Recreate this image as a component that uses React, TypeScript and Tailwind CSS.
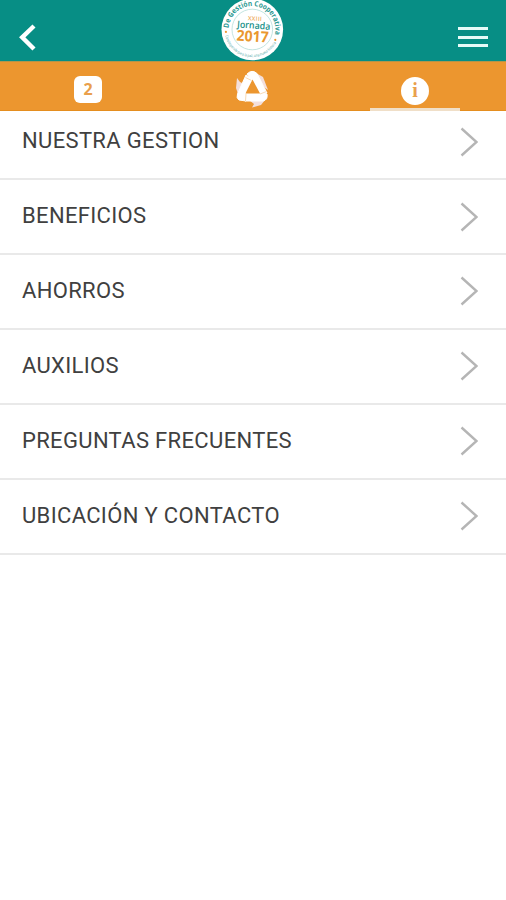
import { useState } from 'react';

type Tab = 'agenda' | 'coop' | 'info';

const ITEMS = [
  'NUESTRA GESTION',
  'BENEFICIOS',
  'AHORROS',
  'AUXILIOS',
  'PREGUNTAS FRECUENTES',
  'UBICACIÓN Y CONTACTO',
];

export default function App() {
  const [tab, setTab] = useState<Tab>('info');

  return (
    <div className="w-full min-h-screen bg-white font-['Roboto',sans-serif]">
      <Header />

      <nav className="h-[50px] bg-[#ec962f] border-t border-t-[#b4954a] border-b border-b-[#e58e1f] flex justify-between pl-[43px] pr-[46px]">
        <TabButton active={tab === 'agenda'} onClick={() => setTab('agenda')}>
          <span className="w-7 h-[27px] mt-[14px] rounded-md bg-white text-[#e9a04c] text-[16px] leading-[27px] font-bold text-center font-['Open_Sans',sans-serif]">
            2
          </span>
        </TabButton>
        <TabButton active={tab === 'coop'} onClick={() => setTab('coop')}>
          <CoopIcon />
        </TabButton>
        <TabButton active={tab === 'info'} onClick={() => setTab('info')}>
          <span className="w-7 h-7 mt-[15px] rounded-full bg-white text-[#e9a04c] text-[20px] leading-[27px] font-bold text-center font-['Liberation_Serif',serif]">
            i
          </span>
        </TabButton>
      </nav>

      <main className="overflow-hidden">
        <ul className="-mt-[5.8px]">
          {ITEMS.map((item) => (
            <li key={item} className="h-[74.9px] border-b-2 border-[#e9e9e9] flex items-center justify-between pl-[22px] pr-[28px]">
              <span className="text-[22px] leading-none tracking-[0.34px] text-[#404040] pb-px">{item}</span>
              <svg className="w-[18px] h-[30px]" viewBox="0 0 18 30" fill="none">
                <path d="M1.5 1.5 L16.5 15 L1.5 28.5" stroke="#b5b5b5" strokeWidth="2.4" />
              </svg>
            </li>
          ))}
        </ul>
      </main>
    </div>
  );
}

function Header() {
  return (
    <header className="h-[61px] bg-[#078e85] flex items-start justify-between pl-[18px] pr-[18px]">
      <button className="mt-[24px] pl-px w-[28px]">
        <svg width="17" height="27" viewBox="0 0 17 27" fill="none">
          <path d="M15 2 L3.2 13.3 L15 25" stroke="white" strokeWidth="4.4" />
        </svg>
      </button>
      <Seal />
      <button className="mt-[27px] flex flex-col gap-[5.5px]">
        <span className="w-[30px] h-[3px] bg-[#e6fbf8]" />
        <span className="w-[30px] h-[3px] bg-[#e6fbf8]" />
        <span className="w-[30px] h-[3px] bg-[#e6fbf8]" />
      </button>
    </header>
  );
}

function TabButton({ active, onClick, children }: { active: boolean; onClick: () => void; children: React.ReactNode }) {
  return (
    <button
      onClick={onClick}
      className={`w-[90px] flex flex-col items-center justify-between border-b-[3px] -mb-px ${
        active ? 'border-[#f0dfc8]' : 'border-transparent'
      }`}
    >
      {children}
    </button>
  );
}

// Round event seal with lettering along the rim
function Seal() {
  return (
    <svg className="w-[62px] h-[61px] overflow-visible" viewBox="0 0 62 61">
      <defs>
        <path id="rim-top" d="M8 33 A23.3 23.3 0 1 1 54 33" />
        <path id="rim-bottom" d="M4.2 35 A27.3 27.3 0 0 0 57.8 35" />
      </defs>
      <circle cx="31.3" cy="29.5" r="30.8" fill="white" />
      <circle cx="31.3" cy="29.5" r="20.3" fill="none" stroke="#a9d8d3" strokeWidth="0.7" />
      <g transform="rotate(8 31 29.5)" fontFamily="Open Sans, sans-serif">
        <text fill="#2b9891" fontSize="7.4" fontWeight="700">
          <textPath href="#rim-top" startOffset="50%" textAnchor="middle" textLength="77" lengthAdjust="spacingAndGlyphs">
            De Gestión Cooperativa
          </textPath>
        </text>
        <text fill="#4ba59f" fontSize="4">
          <textPath href="#rim-bottom" startOffset="50%" textAnchor="middle" textLength="66" lengthAdjust="spacingAndGlyphs">
            Construyendo para la paz, una nueva historia
          </textPath>
        </text>
        <circle cx="5.5" cy="35.5" r="1.1" fill="#ec962f" />
        <circle cx="55.5" cy="36.5" r="1.1" fill="#ec962f" />
      </g>
      <g transform="rotate(4 31 29.5)" textAnchor="middle" fontFamily="Open Sans, sans-serif">
        <text x="33" y="20.5" fontSize="6" fontWeight="600" fill="#efad62" textLength="14">XXIII</text>
        <text x="32.5" y="28.5" fontSize="9.5" fontWeight="600" fill="#168f87" textLength="33" lengthAdjust="spacingAndGlyphs">Jornada</text>
        <text x="32" y="41.5" fontSize="15" fontWeight="700" fill="#ea972f" textLength="32" lengthAdjust="spacingAndGlyphs">2017</text>
      </g>
    </svg>
  );
}

// Three folded bands chasing each other around a triangle
function CoopIcon() {
  return (
    <svg className="w-[36px] h-[40px] mt-[6px]" viewBox="0 0 36 40">
      <g fill="#f3dfdc">
        <path d="M22 5 L29 9 L34 22 L31 20 L25 12 Z" />
        <path d="M3 10 L6 14 L10 16 L4 26 L2 20 Z" />
        <path d="M15 32 L31 32 L27 37 L18 39.5 L20 36 Z" />
      </g>
      <g fill="white" stroke="white" strokeWidth="1" strokeLinejoin="round">
        <path d="M13 6 Q18 1 23 5.5 L33 25 L26 26 L17 11.5 Z" />
        <path d="M12 7 L18.5 11.5 L12 24 L12 33 L5 32 Q2 30 3.5 26 Z" />
        <path d="M11 25 L26 25 L33 26 Q34 32 29 33 L11 33 Z" />
      </g>
      <path d="M18.5 11.5 L26 25.5 L11.5 25.5 Z" fill="#ec962f" />
      <path d="M11.5 9.5 L17.5 12.5 M26 26 L32.5 23.5 M12 26 L11.5 33" stroke="#f5cfa0" strokeWidth="0.8" />
    </svg>
  );
}
